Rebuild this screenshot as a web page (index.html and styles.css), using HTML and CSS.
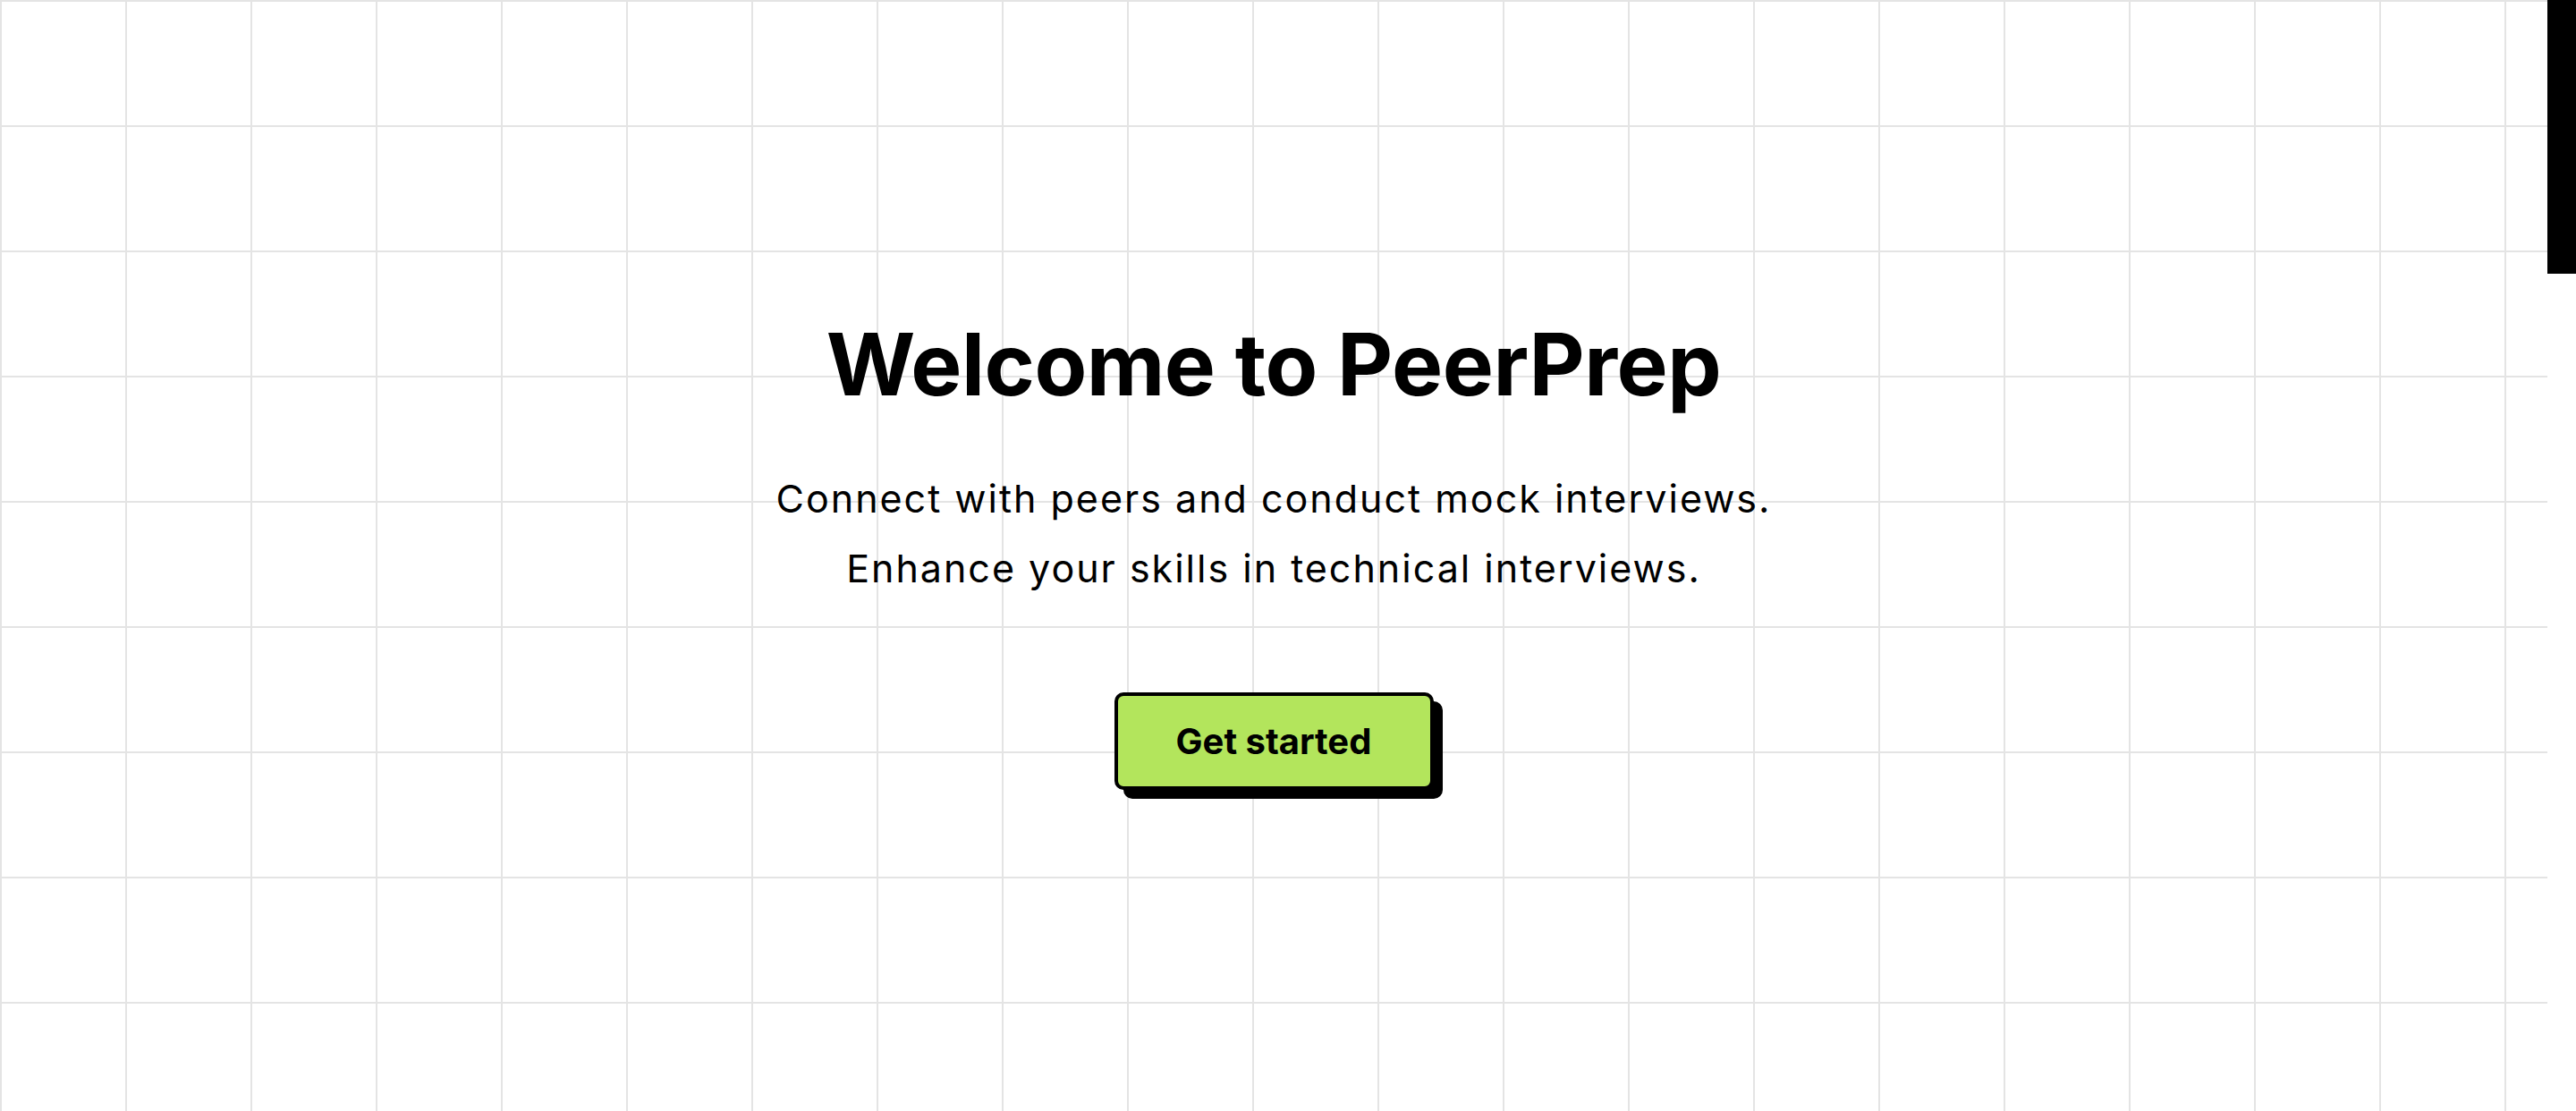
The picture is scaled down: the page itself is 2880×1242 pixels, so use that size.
FILE: index.html
```html
<!DOCTYPE html>
<html lang="en">
<head>
<meta charset="utf-8">
<title>PeerPrep</title>
<link rel="stylesheet" href="styles.css">
</head>
<body>
<div class="page">
  <main class="canvas">
    <h1 class="title">Welcome to PeerPrep</h1>
    <div class="lead">
      <p>Connect with peers and conduct mock interviews.</p>
      <p>Enhance your skills in technical interviews.</p>
    </div>
    <button class="cta" type="button">Get started</button>
  </main>
  <div class="scrollbar"><div class="thumb"></div></div>
</div>
</body>
</html>
```
FILE: styles.css
```css
html, body {
  margin: 0;
  padding: 0;
  height: 100%;
  overflow: hidden;
  background: #fff;
}
body {
  font-family: Inter, "Liberation Sans", sans-serif;
  color: #000;
}
.page {
  display: flex;
  height: 100vh;
}
.canvas {
  flex: 1;
  display: flex;
  flex-direction: column;
  align-items: center;
  justify-content: center;
  background-color: #fff;
  background-image:
    linear-gradient(to right, #e4e4e4 2px, transparent 2px),
    linear-gradient(to bottom, #e4e4e4 2px, transparent 2px);
  background-size: 140px 140px;
  background-position: 0 0;
}
.title {
  margin: 0;
  font-size: 96px;
  line-height: 96px;
  font-weight: 700;
  letter-spacing: -0.5px;
}
.lead {
  margin-top: 63px;
  text-align: center;
}
.lead p {
  margin: 0;
  font-size: 43px;
  line-height: 78px;
  font-weight: 400;
  letter-spacing: 2px;
}
.cta {
  margin-top: 100px;
  width: 357px;
  height: 109px;
  box-sizing: border-box;
  border: 4px solid #000;
  border-radius: 10px;
  background: #b3e55c;
  box-shadow: 10px 10px 0 #000;
  font-family: Inter, "Liberation Sans", sans-serif;
  font-size: 40px;
  font-weight: 700;
  color: #000;
  padding: 0;
}
.scrollbar {
  width: 32px;
  background: #fff;
}
.thumb {
  height: 306px;
  background: #000;
}
```
